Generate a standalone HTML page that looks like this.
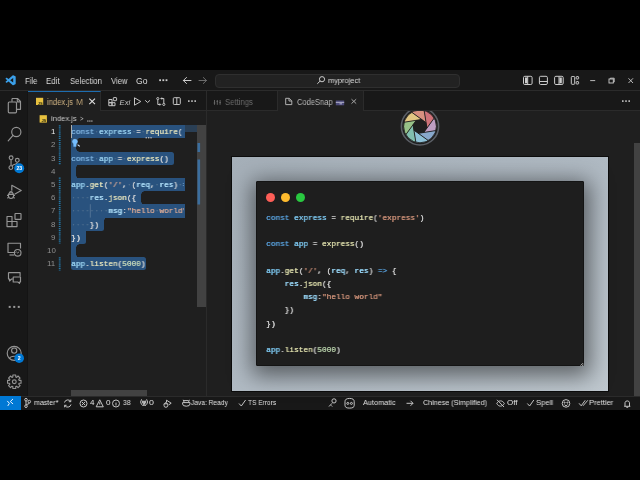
<!DOCTYPE html>
<html><head><meta charset="utf-8">
<style>
*{margin:0;padding:0;box-sizing:border-box}
html,body{width:640px;height:480px;background:#000;overflow:hidden;font-family:"Liberation Sans",sans-serif;color:#cccccc}
.a{position:absolute}
.t{position:absolute;white-space:pre;line-height:1;transform-origin:0 0;will-change:transform}
svg{position:absolute;left:0;top:0;overflow:visible}
</style></head><body>
<!-- window base -->
<div class="a" style="left:0;top:70px;width:640px;height:340px;background:#1f1f1f"></div>
<!-- title bar -->
<div class="a" style="left:0;top:70px;width:640px;height:21px;background:#181818;border-bottom:1px solid #2b2b2b"></div>
<!-- activity bar -->
<div class="a" style="left:0;top:91px;width:28px;height:305px;background:#181818;border-right:1px solid #141414"></div>
<!-- tabs group1 -->
<div class="a" style="left:28px;top:91px;width:178px;height:20px;background:#181818;border-bottom:1px solid #2b2b2b"></div>
<div class="a" style="left:28px;top:91px;width:73px;height:20px;background:#1f1f1f;border-top:1px solid #1d6db0;border-right:1px solid #2b2b2b"></div>
<!-- tabs group2 -->
<div class="a" style="left:206px;top:91px;width:434px;height:20px;background:#181818;border-bottom:1px solid #2b2b2b;border-left:1px solid #2b2b2b"></div>
<div class="a" style="left:277px;top:91px;width:87px;height:20px;background:#1f1f1f;border-left:1px solid #2b2b2b;border-right:1px solid #2b2b2b"></div>
<!-- group divider -->
<div class="a" style="left:206px;top:111px;width:1px;height:285px;background:#2b2b2b"></div>
<!-- status bar -->
<div class="a" style="left:0;top:396px;width:640px;height:14px;background:#181818;border-top:1px solid #2b2b2b"></div>
<div class="a" style="left:0;top:396px;width:21px;height:14px;background:#0078d4"></div>
<!-- search box -->
<div class="a" style="left:215px;top:73.5px;width:245px;height:14px;background:#222222;border:1px solid #2f2f2f;border-radius:4px"></div>

<!-- editor scrollbars -->
<div class="a" style="left:197.3px;top:125.4px;width:9px;height:182px;background:#424242"></div>
<div class="a" style="left:70.5px;top:389.5px;width:76px;height:6.5px;background:#424242"></div>
<!-- minimap shade -->
<div class="a" style="left:184.75px;top:125.4px;width:12.5px;height:7px;background:#2a3f55"></div>
<!-- panel scrollbar -->
<div class="a" style="left:633.5px;top:143px;width:6.5px;height:253px;background:#424242"></div>

<div class="a" style="left:0;top:0;width:184.75px;height:396px;overflow:hidden">
<div class="a" style="left:71.30px;top:125.20px;width:113.45px;height:13.25px;background:#29527e;border-radius:2.5px 0 0 0"></div>
<div class="a" style="left:71.30px;top:138.40px;width:5.14px;height:13.25px;background:#29527e;border-radius:0 0 0 0"></div>
<div class="a" style="left:76.44px;top:138.40px;width:2.5px;height:2.5px;background:radial-gradient(circle at 100% 100%, #1f1f1f 2.5px, #29527e 2.6px)"></div>
<div class="a" style="left:76.44px;top:149.10px;width:2.5px;height:2.5px;background:radial-gradient(circle at 100% 0%, #1f1f1f 2.5px, #29527e 2.6px)"></div>
<div class="a" style="left:71.30px;top:151.60px;width:102.58px;height:13.25px;background:#29527e;border-radius:0 2.5px 2.5px 0"></div>
<div class="a" style="left:71.30px;top:164.80px;width:5.14px;height:13.25px;background:#29527e;border-radius:0 0 0 0"></div>
<div class="a" style="left:76.44px;top:164.80px;width:2.5px;height:2.5px;background:radial-gradient(circle at 100% 100%, #1f1f1f 2.5px, #29527e 2.6px)"></div>
<div class="a" style="left:76.44px;top:175.50px;width:2.5px;height:2.5px;background:radial-gradient(circle at 100% 0%, #1f1f1f 2.5px, #29527e 2.6px)"></div>
<div class="a" style="left:71.30px;top:178.00px;width:113.45px;height:13.25px;background:#29527e;border-radius:0 0 0 0"></div>
<div class="a" style="left:71.30px;top:191.20px;width:70.10px;height:13.25px;background:#29527e;border-radius:0 0 0 0"></div>
<div class="a" style="left:141.40px;top:191.20px;width:2.5px;height:2.5px;background:radial-gradient(circle at 100% 100%, #1f1f1f 2.5px, #29527e 2.6px)"></div>
<div class="a" style="left:141.40px;top:201.90px;width:2.5px;height:2.5px;background:radial-gradient(circle at 100% 0%, #1f1f1f 2.5px, #29527e 2.6px)"></div>
<div class="a" style="left:71.30px;top:204.40px;width:113.45px;height:13.25px;background:#29527e;border-radius:0 0 0 0"></div>
<div class="a" style="left:71.30px;top:217.60px;width:32.98px;height:13.25px;background:#29527e;border-radius:0 0 2.5px 0"></div>
<div class="a" style="left:104.28px;top:217.60px;width:2.5px;height:2.5px;background:radial-gradient(circle at 100% 100%, #1f1f1f 2.5px, #29527e 2.6px)"></div>
<div class="a" style="left:71.30px;top:230.80px;width:14.42px;height:13.25px;background:#29527e;border-radius:0 0 2.5px 0"></div>
<div class="a" style="left:85.72px;top:230.80px;width:2.5px;height:2.5px;background:radial-gradient(circle at 100% 100%, #1f1f1f 2.5px, #29527e 2.6px)"></div>
<div class="a" style="left:71.30px;top:244.00px;width:5.14px;height:13.25px;background:#29527e;border-radius:0 0 0 0"></div>
<div class="a" style="left:76.44px;top:244.00px;width:2.5px;height:2.5px;background:radial-gradient(circle at 100% 100%, #1f1f1f 2.5px, #29527e 2.6px)"></div>
<div class="a" style="left:76.44px;top:254.70px;width:2.5px;height:2.5px;background:radial-gradient(circle at 100% 0%, #1f1f1f 2.5px, #29527e 2.6px)"></div>
<div class="a" style="left:71.30px;top:257.20px;width:74.74px;height:13.25px;background:#29527e;border-radius:0 2.5px 2.5px 2.5px"></div>
<!-- cursor -->
<div class="a" style="left:71px;top:125.2px;width:1px;height:13.2px;background:#aeafad"></div>

<div class="a" style="left:0;top:0;width:184.0px;height:396px;overflow:hidden">
<div class="t" style="left:71.30px;top:128.12px;font-family:'Liberation Mono';font-size:8.0px;transform:scaleX(0.9667);text-shadow:0.35px 0 0 currentColor"><span style="color:#7bafdb">const</span><span style="color:#d9d9d9"><span style="color:#4f6f8f">·</span></span><span style="color:#97cfed">express</span><span style="color:#d9d9d9"><span style="color:#4f6f8f">·</span>=<span style="color:#4f6f8f">·</span></span><span style="color:#dfdfba">require</span><span style="color:#d9d9d9">(</span><span style="color:#d5a794">&#x27;express&#x27;</span><span style="color:#d9d9d9">)</span></div>
<div class="t" style="left:71.30px;top:141.32px;font-family:'Liberation Mono';font-size:8.0px;transform:scaleX(0.9667);text-shadow:0.35px 0 0 currentColor"></div>
<div class="t" style="left:71.30px;top:154.52px;font-family:'Liberation Mono';font-size:8.0px;transform:scaleX(0.9667);text-shadow:0.35px 0 0 currentColor"><span style="color:#7bafdb">const</span><span style="color:#d9d9d9"><span style="color:#4f6f8f">·</span></span><span style="color:#97cfed">app</span><span style="color:#d9d9d9"><span style="color:#4f6f8f">·</span>=<span style="color:#4f6f8f">·</span></span><span style="color:#dfdfba">express</span><span style="color:#d9d9d9">()</span></div>
<div class="t" style="left:71.30px;top:167.72px;font-family:'Liberation Mono';font-size:8.0px;transform:scaleX(0.9667);text-shadow:0.35px 0 0 currentColor"></div>
<div class="t" style="left:71.30px;top:180.92px;font-family:'Liberation Mono';font-size:8.0px;transform:scaleX(0.9667);text-shadow:0.35px 0 0 currentColor"><span style="color:#97cfed">app</span><span style="color:#d9d9d9">.</span><span style="color:#dfdfba">get</span><span style="color:#d9d9d9">(</span><span style="color:#d5a794">&#x27;/&#x27;</span><span style="color:#d9d9d9">,<span style="color:#4f6f8f">·</span>(</span><span style="color:#afdff9">req</span><span style="color:#d9d9d9">,<span style="color:#4f6f8f">·</span></span><span style="color:#afdff9">res</span><span style="color:#d9d9d9">)<span style="color:#4f6f8f">·</span></span><span style="color:#7bafdb">=&gt;</span><span style="color:#d9d9d9"><span style="color:#4f6f8f">·</span>{</span></div>
<div class="t" style="left:71.30px;top:194.12px;font-family:'Liberation Mono';font-size:8.0px;transform:scaleX(0.9667);text-shadow:0.35px 0 0 currentColor"><span style="color:#d9d9d9"><span style="color:#4f6f8f">·</span><span style="color:#4f6f8f">·</span><span style="color:#4f6f8f">·</span><span style="color:#4f6f8f">·</span></span><span style="color:#afdff9">res</span><span style="color:#d9d9d9">.</span><span style="color:#dfdfba">json</span><span style="color:#d9d9d9">({</span></div>
<div class="t" style="left:71.30px;top:207.32px;font-family:'Liberation Mono';font-size:8.0px;transform:scaleX(0.9667);text-shadow:0.35px 0 0 currentColor"><span style="color:#d9d9d9"><span style="color:#4f6f8f">·</span><span style="color:#4f6f8f">·</span><span style="color:#4f6f8f">·</span><span style="color:#4f6f8f">·</span><span style="color:#4f6f8f">·</span><span style="color:#4f6f8f">·</span><span style="color:#4f6f8f">·</span><span style="color:#4f6f8f">·</span></span><span style="color:#afdff9">msg</span><span style="color:#d9d9d9">:</span><span style="color:#d5a794">&quot;hello<span style="color:#4f6f8f">·</span>world&quot;</span></div>
<div class="t" style="left:71.30px;top:220.52px;font-family:'Liberation Mono';font-size:8.0px;transform:scaleX(0.9667);text-shadow:0.35px 0 0 currentColor"><span style="color:#d9d9d9"><span style="color:#4f6f8f">·</span><span style="color:#4f6f8f">·</span><span style="color:#4f6f8f">·</span><span style="color:#4f6f8f">·</span></span><span style="color:#d9d9d9">})</span></div>
<div class="t" style="left:71.30px;top:233.72px;font-family:'Liberation Mono';font-size:8.0px;transform:scaleX(0.9667);text-shadow:0.35px 0 0 currentColor"><span style="color:#d9d9d9">})</span></div>
<div class="t" style="left:71.30px;top:246.92px;font-family:'Liberation Mono';font-size:8.0px;transform:scaleX(0.9667);text-shadow:0.35px 0 0 currentColor"></div>
<div class="t" style="left:71.30px;top:260.12px;font-family:'Liberation Mono';font-size:8.0px;transform:scaleX(0.9667);text-shadow:0.35px 0 0 currentColor"><span style="color:#97cfed">app</span><span style="color:#d9d9d9">.</span><span style="color:#dfdfba">listen</span><span style="color:#d9d9d9">(</span><span style="color:#c2d5b8">5000</span><span style="color:#d9d9d9">)</span></div>
</div>
</div>

<!-- codesnap frame -->
<div class="a" style="left:231px;top:156px;width:378px;height:235.5px;background:linear-gradient(150deg,#a5afb8 0%,#b0bac3 50%,#bfc8cf 100%);border:1px solid #0c0c0c"></div>
<div class="a" style="left:255.5px;top:180.8px;width:328.5px;height:185.6px;background:#1e1e1e;border:1px solid #141414;border-radius:1px;box-shadow:1px 5px 22px 5px rgba(0,0,0,.5)"></div>
<svg width="640" height="480" viewBox="0 0 640 480"><path d="M580.6 365.6L583 363.2 M582.2 365.9L583.3 364.8" stroke="#d0d0d0" stroke-width="0.9"/></svg>
<div class="a" style="left:265.8px;top:192.8px;width:9.4px;height:9.4px;border-radius:50%;background:#fd5e57"></div>
<div class="a" style="left:280.8px;top:192.8px;width:9.4px;height:9.4px;border-radius:50%;background:#febb2e"></div>
<div class="a" style="left:295.8px;top:192.8px;width:9.4px;height:9.4px;border-radius:50%;background:#29c840"></div>
<div class="t" style="left:266.30px;top:214.12px;font-family:'Liberation Mono';font-size:8.0px;transform:scaleX(0.9688);text-shadow:0.35px 0 0 currentColor"><span style="color:#569cd6">const</span><span style="color:#d4d4d4"> </span><span style="color:#7cc6ee">express</span><span style="color:#d4d4d4"> = </span><span style="color:#dcdcaa">require</span><span style="color:#d4d4d4">(</span><span style="color:#ce9178">&#x27;express&#x27;</span><span style="color:#d4d4d4">)</span></div>
<div class="t" style="left:266.30px;top:227.30px;font-family:'Liberation Mono';font-size:8.0px;transform:scaleX(0.9688);text-shadow:0.35px 0 0 currentColor"></div>
<div class="t" style="left:266.30px;top:240.48px;font-family:'Liberation Mono';font-size:8.0px;transform:scaleX(0.9688);text-shadow:0.35px 0 0 currentColor"><span style="color:#569cd6">const</span><span style="color:#d4d4d4"> </span><span style="color:#7cc6ee">app</span><span style="color:#d4d4d4"> = </span><span style="color:#dcdcaa">express</span><span style="color:#d4d4d4">()</span></div>
<div class="t" style="left:266.30px;top:253.66px;font-family:'Liberation Mono';font-size:8.0px;transform:scaleX(0.9688);text-shadow:0.35px 0 0 currentColor"></div>
<div class="t" style="left:266.30px;top:266.84px;font-family:'Liberation Mono';font-size:8.0px;transform:scaleX(0.9688);text-shadow:0.35px 0 0 currentColor"><span style="color:#7cc6ee">app</span><span style="color:#d4d4d4">.</span><span style="color:#dcdcaa">get</span><span style="color:#d4d4d4">(</span><span style="color:#ce9178">&#x27;/&#x27;</span><span style="color:#d4d4d4">, (</span><span style="color:#9cdcfe">req</span><span style="color:#d4d4d4">, </span><span style="color:#9cdcfe">res</span><span style="color:#d4d4d4">) </span><span style="color:#569cd6">=&gt;</span><span style="color:#d4d4d4"> {</span></div>
<div class="t" style="left:266.30px;top:280.02px;font-family:'Liberation Mono';font-size:8.0px;transform:scaleX(0.9688);text-shadow:0.35px 0 0 currentColor"><span style="color:#d4d4d4">    </span><span style="color:#9cdcfe">res</span><span style="color:#d4d4d4">.</span><span style="color:#dcdcaa">json</span><span style="color:#d4d4d4">({</span></div>
<div class="t" style="left:266.30px;top:293.20px;font-family:'Liberation Mono';font-size:8.0px;transform:scaleX(0.9688);text-shadow:0.35px 0 0 currentColor"><span style="color:#d4d4d4">        </span><span style="color:#9cdcfe">msg</span><span style="color:#d4d4d4">:</span><span style="color:#ce9178">&quot;hello world&quot;</span></div>
<div class="t" style="left:266.30px;top:306.38px;font-family:'Liberation Mono';font-size:8.0px;transform:scaleX(0.9688);text-shadow:0.35px 0 0 currentColor"><span style="color:#d4d4d4">    </span><span style="color:#d4d4d4">})</span></div>
<div class="t" style="left:266.30px;top:319.56px;font-family:'Liberation Mono';font-size:8.0px;transform:scaleX(0.9688);text-shadow:0.35px 0 0 currentColor"><span style="color:#d4d4d4">})</span></div>
<div class="t" style="left:266.30px;top:332.74px;font-family:'Liberation Mono';font-size:8.0px;transform:scaleX(0.9688);text-shadow:0.35px 0 0 currentColor"></div>
<div class="t" style="left:266.30px;top:345.92px;font-family:'Liberation Mono';font-size:8.0px;transform:scaleX(0.9688);text-shadow:0.35px 0 0 currentColor"><span style="color:#7cc6ee">app</span><span style="color:#d4d4d4">.</span><span style="color:#dcdcaa">listen</span><span style="color:#d4d4d4">(</span><span style="color:#b5cea8">5000</span><span style="color:#d4d4d4">)</span></div>

<div class="t" style="left:24.88px;top:76.59px;font-size:8.6px;color:#dcdcdc;font-family:'Liberation Sans';font-weight:normal;font-style:normal;transform:scaleX(0.894);">File</div>
<div class="t" style="left:46.37px;top:76.59px;font-size:8.6px;color:#dcdcdc;font-family:'Liberation Sans';font-weight:normal;font-style:normal;transform:scaleX(0.919);">Edit</div>
<div class="t" style="left:69.59px;top:76.59px;font-size:8.6px;color:#dcdcdc;font-family:'Liberation Sans';font-weight:normal;font-style:normal;transform:scaleX(0.903);">Selection</div>
<div class="t" style="left:110.50px;top:76.59px;font-size:8.6px;color:#dcdcdc;font-family:'Liberation Sans';font-weight:normal;font-style:normal;transform:scaleX(0.889);">View</div>
<div class="t" style="left:135.83px;top:76.59px;font-size:8.6px;color:#dcdcdc;font-family:'Liberation Sans';font-weight:normal;font-style:normal;transform:scaleX(0.978);">Go</div>
<div class="t" style="left:327.76px;top:76.50px;font-size:8.0px;color:#dcdcdc;font-family:'Liberation Sans';font-weight:normal;font-style:normal;transform:scaleX(0.927);">myproject</div>
<div class="t" style="left:47.44px;top:97.68px;font-size:8.5px;color:#d2b584;font-family:'Liberation Sans';font-weight:normal;font-style:normal;transform:scaleX(0.905);">index.js</div>
<div class="t" style="left:76.42px;top:97.76px;font-size:8.4px;color:#b39a70;font-family:'Liberation Sans';font-weight:normal;font-style:normal;transform:scaleX(1.015);">M</div>
<div class="t" style="left:224.89px;top:97.84px;font-size:8.3px;color:#6b6b6b;font-family:'Liberation Sans';font-weight:normal;font-style:normal;transform:scaleX(0.932);">Settings</div>
<div class="t" style="left:296.52px;top:97.54px;font-size:8.3px;color:#b8b8b8;font-family:'Liberation Sans';font-weight:normal;font-style:normal;transform:scaleX(0.909);">CodeSnap</div>
<div class="t" style="left:51.24px;top:114.98px;font-size:7.9px;color:#c8c8c8;font-family:'Liberation Sans';font-weight:normal;font-style:normal;transform:scaleX(0.963);">index.js</div>
<div class="t" style="left:79.77px;top:114.78px;font-size:7.9px;color:#c8c8c8;font-family:'Liberation Sans';font-weight:normal;font-style:normal;transform:scaleX(0.734);">&gt;</div>
<div class="t" style="left:34.08px;top:399.20px;font-size:8.0px;color:#e0e0e0;font-family:'Liberation Sans';font-weight:normal;font-style:normal;transform:scaleX(0.885);">master*</div>
<div class="t" style="left:89.60px;top:399.20px;font-size:8.0px;color:#e0e0e0;font-family:'Liberation Sans';font-weight:normal;font-style:normal;transform:scaleX(0.919);">4</div>
<div class="t" style="left:105.76px;top:399.20px;font-size:8.0px;color:#e0e0e0;font-family:'Liberation Sans';font-weight:normal;font-style:normal;transform:scaleX(1.020);">0</div>
<div class="t" style="left:122.70px;top:399.20px;font-size:8.0px;color:#e0e0e0;font-family:'Liberation Sans';font-weight:normal;font-style:normal;transform:scaleX(0.848);">38</div>
<div class="t" style="left:149.48px;top:399.20px;font-size:8.0px;color:#e0e0e0;font-family:'Liberation Sans';font-weight:normal;font-style:normal;transform:scaleX(1.110);">0</div>
<div class="t" style="left:191.18px;top:399.20px;font-size:8.0px;color:#e0e0e0;font-family:'Liberation Sans';font-weight:normal;font-style:normal;transform:scaleX(0.828);">Java: Ready</div>
<div class="t" style="left:247.87px;top:399.20px;font-size:8.0px;color:#e0e0e0;font-family:'Liberation Sans';font-weight:normal;font-style:normal;transform:scaleX(0.820);">TS Errors</div>
<div class="t" style="left:363.25px;top:399.20px;font-size:8.0px;color:#e0e0e0;font-family:'Liberation Sans';font-weight:normal;font-style:normal;transform:scaleX(0.918);">Automatic</div>
<div class="t" style="left:423.39px;top:399.20px;font-size:8.0px;color:#e0e0e0;font-family:'Liberation Sans';font-weight:normal;font-style:normal;transform:scaleX(0.894);">Chinese (Simplified)</div>
<div class="t" style="left:506.69px;top:399.20px;font-size:8.0px;color:#e0e0e0;font-family:'Liberation Sans';font-weight:normal;font-style:normal;transform:scaleX(0.978);">Off</div>
<div class="t" style="left:535.94px;top:399.20px;font-size:8.0px;color:#e0e0e0;font-family:'Liberation Sans';font-weight:normal;font-style:normal;transform:scaleX(0.957);">Spell</div>
<div class="t" style="left:588.90px;top:399.20px;font-size:8.0px;color:#e0e0e0;font-family:'Liberation Sans';font-weight:normal;font-style:normal;transform:scaleX(0.938);">Prettier</div>
<div class="t" style="left:51.27px;top:128.28px;font-size:7.9px;color:#e8e8e8;font-family:'Liberation Sans';font-weight:normal;font-style:normal;">1</div>
<div class="t" style="left:51.27px;top:141.48px;font-size:7.9px;color:#909090;font-family:'Liberation Sans';font-weight:normal;font-style:normal;">2</div>
<div class="t" style="left:51.19px;top:154.69px;font-size:7.9px;color:#909090;font-family:'Liberation Sans';font-weight:normal;font-style:normal;">3</div>
<div class="t" style="left:51.11px;top:167.88px;font-size:7.9px;color:#909090;font-family:'Liberation Sans';font-weight:normal;font-style:normal;">4</div>
<div class="t" style="left:51.19px;top:181.09px;font-size:7.9px;color:#909090;font-family:'Liberation Sans';font-weight:normal;font-style:normal;">5</div>
<div class="t" style="left:51.19px;top:194.28px;font-size:7.9px;color:#909090;font-family:'Liberation Sans';font-weight:normal;font-style:normal;">6</div>
<div class="t" style="left:51.27px;top:207.48px;font-size:7.9px;color:#909090;font-family:'Liberation Sans';font-weight:normal;font-style:normal;">7</div>
<div class="t" style="left:51.19px;top:220.68px;font-size:7.9px;color:#909090;font-family:'Liberation Sans';font-weight:normal;font-style:normal;">8</div>
<div class="t" style="left:51.27px;top:233.88px;font-size:7.9px;color:#909090;font-family:'Liberation Sans';font-weight:normal;font-style:normal;">9</div>
<div class="t" style="left:46.80px;top:247.09px;font-size:7.9px;color:#909090;font-family:'Liberation Sans';font-weight:normal;font-style:normal;">10</div>
<div class="t" style="left:47.46px;top:260.29px;font-size:7.9px;color:#909090;font-family:'Liberation Sans';font-weight:normal;font-style:normal;">11</div>
<svg width="640" height="480" viewBox="0 0 640 480" style="clip-path:inset(111px 0 0 207px)">
<circle cx="420.0" cy="126.4" r="18.6" fill="#1f1f1f" stroke="#5b5f66" stroke-width="1.6"/>
<path d="M426.95 128.07L434.16 118.13A16.4 16.4 0 0 0 424.17 110.54Z" fill="#cf7279"/><path d="M423.73 132.49L435.86 130.57A16.4 16.4 0 0 0 434.16 118.13Z" fill="#bf9ec4"/><path d="M418.33 133.35L428.27 140.56A16.4 16.4 0 0 0 435.86 130.57Z" fill="#88a8cc"/><path d="M413.91 130.13L415.83 142.26A16.4 16.4 0 0 0 428.27 140.56Z" fill="#8dc1d7"/><path d="M413.05 124.73L405.84 134.67A16.4 16.4 0 0 0 415.83 142.26Z" fill="#81bfaf"/><path d="M416.27 120.31L404.14 122.23A16.4 16.4 0 0 0 405.84 134.67Z" fill="#97c288"/><path d="M421.67 119.45L411.73 112.24A16.4 16.4 0 0 0 404.14 122.23Z" fill="#e2c783"/><path d="M426.09 122.67L424.17 110.54A16.4 16.4 0 0 0 411.73 112.24Z" fill="#d99180"/>
<path d="M426.95 128.07L424.17 110.54M423.73 132.49L434.16 118.13M418.33 133.35L435.86 130.57M413.91 130.13L428.27 140.56M413.05 124.73L415.83 142.26M416.27 120.31L405.84 134.67M421.67 119.45L404.14 122.23M426.09 122.67L411.73 112.24" stroke="#1f1f1f" stroke-width="0.9" fill="none"/>
<path d="M426.95 128.07L423.73 132.49L418.33 133.35L413.91 130.13L413.05 124.73L416.27 120.31L421.67 119.45L426.09 122.67Z" fill="#1f1f1f"/>
<circle cx="420.0" cy="126.4" r="16.4" fill="none" stroke="#1f1f1f" stroke-width="0.8"/>
</svg>
<svg width="640" height="480" viewBox="0 0 640 480">
<!-- VS Code logo -->
<g transform="translate(5.6,75.2) scale(0.101)">
<path fill="#3ba0ea" d="M96.46 10.8L75.86.87a6.23 6.23 0 0 0-7.1 1.2L29.35 38.04 12.19 25.01a4.16 4.16 0 0 0-5.31.24L1.37 30.26a4.17 4.17 0 0 0 0 6.16L16.24 50 1.37 63.58a4.17 4.17 0 0 0 0 6.16l5.51 5.01a4.16 4.16 0 0 0 5.310.24l17.16-13.03 39.41 35.970a6.23 6.23 0 0 0 7.1 1.2l20.6-9.92A6.25 6.25 0 0 0 100 83.6V16.4a6.25 6.25 0 0 0-3.54-5.6zM75.02 72.7L45.11 50l29.91-22.7v45.4z"/>
</g>
<!-- title menu overflow dots -->
<g fill="#cccccc"><rect x="159.2" y="79.3" width="1.8" height="1.8"/><rect x="162.4" y="79.3" width="1.8" height="1.8"/><rect x="165.6" y="79.3" width="1.8" height="1.8"/></g>
<!-- back/forward arrows -->
<g fill="none" stroke-width="1" stroke-linecap="round">
<path d="M183.3 80.5H191 M186.5 77.5L183.3 80.5L186.5 83.5" stroke="#cccccc"/>
<path d="M199 80.5H206.5 M203.3 77.5L206.5 80.5L203.3 83.5" stroke="#6b6b6b"/>
</g>
<!-- search icon in command center -->
<g fill="none" stroke="#cccccc" stroke-width="1"><circle cx="322" cy="79.2" r="2.6"/><path d="M320.2 81L317.3 83.8"/></g>
<!-- layout icons -->
<g fill="none" stroke="#cccccc" stroke-width="1">
<rect x="523.5" y="76.3" width="8.6" height="8.2" rx="1.3"/><rect x="525" y="77.5" width="2.4" height="5.8" fill="#cccccc" stroke="none"/><path d="M527.7 76.3V84.5"/>
<rect x="539.4" y="76.3" width="8" height="8.2" rx="1.3"/><path d="M539.4 81.5H547.4"/>
<rect x="554.6" y="76.3" width="8.6" height="8.2" rx="1.3"/><rect x="559.4" y="77.5" width="2.4" height="5.8" fill="#cccccc" stroke="none"/><path d="M559 76.3V84.5"/>
<rect x="571.3" y="76.5" width="3.4" height="7.8" rx="0.8"/><rect x="576.2" y="76.6" width="2.4" height="2.4" rx="0.5"/><rect x="576.2" y="81.6" width="2.4" height="2.4" rx="0.5"/>
</g>
<!-- window controls -->
<g fill="none" stroke="#cccccc" stroke-width="0.9">
<path d="M590.2 80.6H595.2"/>
<rect x="609" y="79" width="4.3" height="4" /><path d="M610.3 79V78.2H614.2V82H613.3"/>
<path d="M628.5 78.3L633 83 M633 78.3L628.5 83"/>
</g>

<!-- activity bar icons -->
<g fill="none" stroke="#959595" stroke-width="1.15" stroke-linejoin="round">
<!-- explorer -->
<path d="M12 98.5H17.5L20.5 101.5V109.3H16.5"/><path d="M12 98.5V101.8"/>
<path d="M17.3 98.5V101.8H20.5"/>
<rect x="8.3" y="102" width="8.2" height="10.8" rx="1"/>
<!-- search -->
<circle cx="16.3" cy="132" r="4.6"/><path d="M13 135.3L8.2 140.8" stroke-linecap="round"/>
<!-- scm -->
<circle cx="11.1" cy="157.8" r="1.9"/><circle cx="17.3" cy="160.3" r="1.9"/><circle cx="10.9" cy="167.6" r="1.9"/>
<path d="M11.05 159.7V165.7"/><path d="M17.3 162.2C17.3 165 14 163.5 11.9 166"/>
<!-- run & debug -->
<path d="M11.8 190.8V185.3L21.2 190.6L14.6 194.2"/>
<ellipse cx="11" cy="195.6" rx="2.6" ry="2.9"/><path d="M9.3 192.9A1.8 1.8 0 0 1 12.7 192.9 M7 195.3H8.4 M13.6 195.3H15 M7.4 198.2L8.6 197.3 M14.6 198.2L13.4 197.3 M8.3 194.5H13.7"/>
<!-- extensions -->
<path d="M7 216.5H12V221.5H7Z M7 221.5H12V226.6H7Z M12 221.5H17V226.6H12Z"/>
<rect x="15" y="213.5" width="6" height="5.8" rx="0.6"/>
<!-- remote explorer -->
<path d="M15.5 252.5H8V243.2H20.5V248.5"/><path d="M9.5 255H14"/>
<circle cx="17.7" cy="252.8" r="3.3"/><path d="M16.3 251.8L17.7 253 M19.1 251.8L17.7 253" stroke-width="0.9"/>
<!-- comments -->
<path d="M8.5 272.6H20.1V276.5 M8.5 272.6V279H9.5V281L11.6 279H13"/>
<path d="M13.2 277H20.5V282H19.5V283.4L17.8 282H13.2Z"/>
<!-- account -->
<circle cx="14.2" cy="353.3" r="7"/><circle cx="14.2" cy="350.6" r="2.6"/><path d="M9.5 358.5C10.5 355.5 17.9 355.5 18.9 358.5"/>
<!-- gear -->
<circle cx="14.3" cy="381.8" r="1.9"/>
</g>
<path d="M12.84 377.02L12.87 375.05L15.73 375.05L15.76 377.02L16.65 377.39L18.06 376.01L20.09 378.04L18.71 379.45L19.08 380.34L21.05 380.37L21.05 383.23L19.08 383.26L18.71 384.15L20.09 385.56L18.06 387.59L16.65 386.21L15.76 386.58L15.73 388.55L12.87 388.55L12.84 386.58L11.95 386.21L10.54 387.59L8.51 385.56L9.89 384.15L9.52 383.26L7.55 383.23L7.55 380.37L9.52 380.34L9.89 379.45L8.51 378.04L10.54 376.01L11.95 377.39Z" fill="none" stroke="#959595" stroke-width="1.1" stroke-linejoin="round"/>
<g fill="#9a9a9a"><rect x="8.7" y="305.9" width="2" height="2"/><rect x="13.25" y="305.9" width="2" height="2"/><rect x="17.75" y="305.9" width="2" height="2"/></g>
<!-- badges -->
<circle cx="19.2" cy="168.2" r="5" fill="#0078d4"/>
<text x="19.3" y="170" font-family="Liberation Sans" font-size="5.2" font-weight="bold" fill="#fff" text-anchor="middle">23</text>
<circle cx="19.2" cy="358.2" r="4.8" fill="#0078d4"/>
<text x="19.3" y="360" font-family="Liberation Sans" font-size="5.2" font-weight="bold" fill="#fff" text-anchor="middle">2</text>

<!-- tab js icon -->
<rect x="36" y="97.8" width="7.2" height="7.2" fill="#e8c13f"/>
<text x="42.6" y="104.6" font-family="Liberation Sans" font-size="4" font-weight="bold" fill="#2a2a10" text-anchor="end">JS</text>
<!-- tab close -->
<path d="M89.3 98.6L95 104.2M95 98.6L89.3 104.2" stroke="#e0e0e0" stroke-width="1.1"/>
<!-- breadcrumb js icon -->
<rect x="39.6" y="115.2" width="7.3" height="7.4" fill="#e8c13f"/>
<text x="46.3" y="122" font-family="Liberation Sans" font-size="4" font-weight="bold" fill="#2a2a10" text-anchor="end">JS</text>
<g fill="#a9a9a9"><rect x="87.2" y="120.4" width="1.3" height="1.3"/><rect x="89.2" y="120.4" width="1.3" height="1.3"/><rect x="91.2" y="120.4" width="1.3" height="1.3"/></g>

<!-- editor toolbar -->
<g fill="none" stroke="#c5c5c5" stroke-width="1" stroke-linejoin="round">
<path d="M108.8 99.5H112V102.7H108.8Z M108.8 102.7H112V105.7H108.8Z M112 102.7H115V105.7H112Z"/>
<rect x="113.3" y="97.6" width="3.3" height="3.1" rx="0.5"/>
<path d="M134.5 97.8L140.8 101.5L134.5 105.2Z"/>
<path d="M145.2 100.3L147.6 102.5L150 100.3"/>
<circle cx="157.8" cy="98.6" r="1.1"/><circle cx="163.8" cy="104.4" r="1.1"/>
<path d="M157.8 99.7V104.5H160.6 M163.8 103.3V98.5H161" /><path d="M159.8 103.5L160.8 104.5L159.8 105.5 M161.8 97.5L160.8 98.5L161.8 99.5"/>
<rect x="173.3" y="97.7" width="7" height="6.8" rx="0.9"/><path d="M176.8 97.7V104.5"/>
</g>
<text x="119.6" y="104.9" font-family="Liberation Sans" font-size="7.6" font-style="italic" fill="#c5c5c5">Exi</text>
<g fill="#c5c5c5"><rect x="188" y="100.3" width="1.6" height="1.6"/><rect x="191.2" y="100.3" width="1.6" height="1.6"/><rect x="194.4" y="100.3" width="1.6" height="1.6"/></g>
<g fill="#c5c5c5"><rect x="622" y="100.3" width="1.6" height="1.6"/><rect x="625.2" y="100.3" width="1.6" height="1.6"/><rect x="628.4" y="100.3" width="1.6" height="1.6"/></g>

<!-- settings tab icon -->
<g stroke="#6b6b6b" stroke-width="0.9" fill="none"><path d="M214.5 100V104.8 M217.3 100V104.8 M220.1 100V104.8"/><path d="M213.7 103H215.3 M216.5 101.4H218.1 M219.3 102.6H220.9"/></g>
<!-- codesnap tab icons -->
<g stroke="#b0b0b0" stroke-width="1" fill="none"><path d="M285.7 98.3H289.2L291.8 100.9V104.6H285.7Z"/><path d="M289 98.3V101H291.8"/></g>
<rect x="335.8" y="100.5" width="8.4" height="4.8" fill="#4c4a7a"/><rect x="335.8" y="101.9" width="8.4" height="0.8" fill="#c7c7d8"/><rect x="339.5" y="103.2" width="2.5" height="1.2" fill="#a0a0c0"/>
<path d="M351.5 99.2L356.2 103.6M356.2 99.2L351.5 103.6" stroke="#a8a8a8" stroke-width="1"/>

<!-- dirty diff gutter -->
<g stroke="#2277a8" stroke-width="1.8" stroke-dasharray="1.2 0.9">
<path d="M59.7 125.2V164.8"/>
<path d="M59.7 177.6V243.6"/>
<path d="M59.7 257.2V270.4"/>
</g>
<!-- lightbulb -->
<g>
<circle cx="74.9" cy="141.6" r="3.1" fill="#75beff" stroke="#1f1f1f" stroke-width="0.5"/>
<rect x="73.4" y="143.8" width="3" height="2.9" fill="#75beff"/>
<path d="M77.6 144.6L79.8 146.4" stroke="#d6e8ff" stroke-width="1.1"/>
</g>
<!-- hint dots under require -->
<g fill="#c0c0c0"><rect x="145.6" y="137.1" width="1.3" height="1.3"/><rect x="148" y="137.1" width="1.3" height="1.3"/><rect x="150.4" y="137.1" width="1.3" height="1.3"/></g>
<!-- indent guide -->
<path d="M90.3 204.2V217.6" stroke="#5a7a9a" stroke-width="0.8"/>
<!-- overview ruler markers -->
<rect x="197.5" y="143" width="2.6" height="9" fill="#3b6e9e"/>
<rect x="197.5" y="159.5" width="2.6" height="45" fill="#3b6e9e"/>

<!-- status bar icons -->
<path d="M7.5 401.2L9.4 403.3L8 405.6 M12.75 399.2L10.3 401.6L12.75 403.7" fill="none" stroke="#e8f4ff" stroke-width="1" stroke-linecap="round"/>
<g fill="none" stroke="#cccccc" stroke-width="0.95">
<circle cx="26" cy="399.7" r="1.3"/><circle cx="26" cy="406.2" r="1.3"/><circle cx="29.3" cy="401.6" r="1.3"/><path d="M26 401V404.9 M29.3 402.9C29.3 404.5 26.5 403.8 26.2 405"/>
<path d="M64.5 402.5A3.4 3.4 0 0 1 70.7 401.5 M71 404.5A3.4 3.4 0 0 1 64.8 405.5 M70.8 399.6V401.7H68.8 M64.6 407.3V405.3H66.6"/>
<circle cx="83.5" cy="403.5" r="3.5"/><path d="M81.9 401.9L85.1 405.1M85.1 401.9L81.9 405.1"/>
<path d="M99.75 399.8L103.3 406.8H96.2Z"/><path d="M99.75 402.2V404.6"/>
<circle cx="116" cy="403.5" r="3.5"/><path d="M116 402.6V405.5"/>
<path d="M141.6 399.3Q139.6 402 141.6 404.7 M146.6 399.3Q148.6 402 146.6 404.7 M142.9 400.5Q142 402 142.9 403.5 M145.3 400.5Q146.2 402 145.3 403.5 M144.1 402.6L142.6 406 M144.1 402.6L145.6 406 M143 405.2H145.2"/><circle cx="144.1" cy="401.9" r="0.7" fill="#e0e0e0"/>
<path d="M166.5 402.3V400.2L171.2 403.2L168.8 404.8"/><path d="M164 403.8H167.8V405.4A1.9 1.9 0 0 1 164 405.4Z M164.8 403.7A1.1 1.1 0 0 1 167 403.7"/>
<path d="M182.6 402.6H190V404A3.7 2.2 0 0 1 182.6 404Z M184.2 402.4L183.2 399.8 M188.4 402.4L189.4 399.8 M184 400.6H188.6"/>
<path d="M239 403.5L241.3 406L245.6 400"/>
<path d="M329 406.5L332 403.3 M331 405.3L332.2 406.5 M334 403A2.1 2.1 0 1 0 334 398.8A2.1 2.1 0 1 0 334 403"/>
<path d="M345 401.5A4.5 3 0 0 1 354.2 401.5V405.5A4.6 2.6 0 0 1 345 405.5Z"/><circle cx="347.8" cy="403.4" r="1"/><circle cx="351.4" cy="403.4" r="1"/>
<path d="M406.5 403.3H413 M410.5 400.8L413 403.3L410.5 405.8"/>
<path d="M496.8 403.5C498.5 400 502.5 400 504.3 403.5C502.5 407 498.5 407 496.8 403.5Z M497 399.8L504 407"/>
<path d="M527.3 403.5L529.6 406L533.8 400"/>
<circle cx="566" cy="403.4" r="3.8"/><circle cx="564.6" cy="402.6" r="0.6"/><circle cx="567.4" cy="402.6" r="0.6"/><path d="M564.3 404.5A1.9 1.9 0 0 0 567.7 404.5"/>
<path d="M579 403.3L581.2 405.8L585.2 400.3 M583 405.8L587.8 400.3"/>
<path d="M624.2 406.3H630.3 M625 406.3V402.7A2.3 2.3 0 0 1 629.5 402.7V406.3 M626.3 407.3H628.2"/>
</g>
</svg>

</body></html>
